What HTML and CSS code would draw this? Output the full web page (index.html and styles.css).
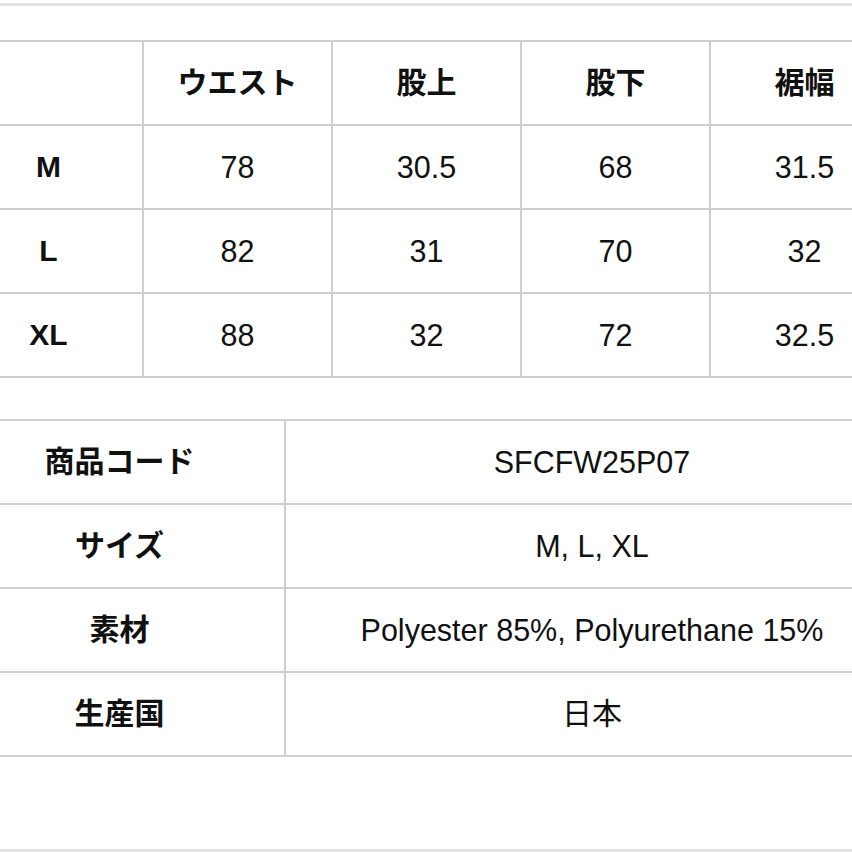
FILE: index.html
```html
<!DOCTYPE html>
<html lang="ja">
<head>
<meta charset="utf-8">
<title>Size table</title>
<link rel="stylesheet" href="styles.css">
</head>
<body>
<div class="page">
  <div class="rule rule-top"></div>
  <div class="scroller scroller-size">
    <table class="grid size">
      <tr>
        <th></th>
        <th>ウエスト</th>
        <th>股上</th>
        <th>股下</th>
        <th>裾幅</th>
      </tr>
      <tr>
        <th>M</th>
        <td>78</td>
        <td>30.5</td>
        <td>68</td>
        <td>31.5</td>
      </tr>
      <tr>
        <th>L</th>
        <td>82</td>
        <td>31</td>
        <td>70</td>
        <td>32</td>
      </tr>
      <tr>
        <th>XL</th>
        <td>88</td>
        <td>32</td>
        <td>72</td>
        <td>32.5</td>
      </tr>
    </table>
  </div>
  <div class="scroller scroller-spec">
    <table class="grid spec">
      <tr>
        <th>商品コード</th>
        <td>SFCFW25P07</td>
      </tr>
      <tr>
        <th>サイズ</th>
        <td>M, L, XL</td>
      </tr>
      <tr>
        <th>素材</th>
        <td>Polyester 85%, Polyurethane 15%</td>
      </tr>
      <tr>
        <th>生産国</th>
        <td class="jp">日本</td>
      </tr>
    </table>
  </div>
  <div class="rule rule-bottom"></div>
</div>
</body>
</html>
```

FILE: styles.css
```css
html, body {
  margin: 0;
  padding: 0;
  background: #ffffff;
  overflow: hidden;
}

.page {
  width: 852px;
  height: 852px;
  overflow: hidden;
  font-family: "Liberation Sans", "Noto Sans CJK JP", Arial, sans-serif;
  color: #111111;
  display: flex;
  flex-direction: column;
}

.rule {
  height: 3px;
  background: #e3e3e3;
  flex: none;
}

.rule-top {
  margin-top: 3px;
}

.rule-bottom {
  margin-top: 92px;
}

.scroller {
  width: 852px;
  overflow: hidden;
  flex: none;
}

.scroller-size {
  margin-top: 34px;
}

.scroller-spec {
  margin-top: 41px;
}

.grid {
  border-collapse: collapse;
  margin-left: -47px;
  table-layout: fixed;
}

.grid th,
.grid td {
  border: 2px solid #cfcfcf;
  height: 82px;
  padding: 0;
  text-align: center;
  vertical-align: middle;
  line-height: 1;
  white-space: nowrap;
}

.grid th {
  font-size: 30px;
  font-weight: 700;
}

.grid td {
  font-size: 30.5px;
  font-weight: 400;
}

.grid td.jp {
  font-size: 30px;
}

.size {
  width: 945px;
}

.size th,
.size td {
  width: 187px;
}

.spec {
  width: 945px;
}

.spec th {
  width: 329px;
}

.spec td {
  width: 612px;
}
```
